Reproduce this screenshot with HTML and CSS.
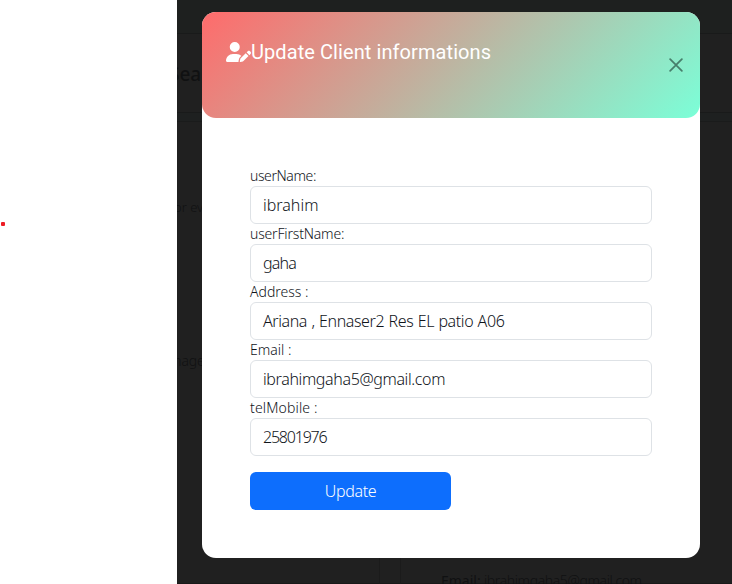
FILE: index.html
```html
<!DOCTYPE html>
<html lang="en">
<head>
<meta charset="utf-8">
<title>Update Client</title>
<link rel="stylesheet" href="styles.css">
</head>
<body>
<aside class="margin"><span class="marker"></span></aside>
<main class="page">
  <div class="backdrop" aria-hidden="true">
    <div class="navbar"></div>
    <div class="toolbar"></div>
    <div class="strip"></div>
    <div class="content"></div>
    <span class="ghost ghost-search">Sea</span>
    <span class="ghost ghost-or">or ev</span>
    <span class="ghost ghost-image">mage</span>
    <span class="ghost ghost-email"><b>Email:</b> ibrahimgaha5@gmail.com</span>
    <span class="column-gap"></span>
  </div>
  <section class="modal">
    <header class="modal-header">
      <h1 class="title">
        <svg class="user-pen" viewBox="0 0 640 512"><path fill="currentColor" d="M224 256A128 128 0 1 0 224 0a128 128 0 1 0 0 256zm-45.700 48C79.800 304 0 383.800 0 482.300C0 498.700 13.300 512 29.700 512H322.800c-3.100-8.800-3.700-18.400-1.400-27.800l15-60.100c2.800-11.300 8.600-21.500 16.800-29.700l40.300-40.300c-32.100-31-75.700-50.100-123.900-50.100H178.300zm435.500-68.300c-15.600-15.600-40.900-15.600-56.600 0l-29.400 29.400 71 71 29.400-29.400c15.600-15.600 15.600-40.900 0-56.600l-14.400-14.400zM375.900 417c-4.100 4.100-7 9.200-8.400 14.900l-15 60.100c-1.400 5.500 .2 11.200 4.200 15.200s9.700 5.600 15.200 4.200l60.100-15c5.600-1.400 10.800-4.300 14.900-8.400L576.100 358.700l-71-71L375.900 417z"/></svg><span>Update Client informations</span>
      </h1>
      <button class="close" aria-label="Close"><svg viewBox="0 0 16 16"><path d="M1.300 1.300L14.700 14.700M14.700 1.300L1.300 14.700" fill="none" stroke="currentColor" stroke-width="2" stroke-linecap="round"/></svg></button>
    </header>
    <form class="form">
      <label class="label tight">userName:</label>
      <div class="input">ibrahim</div>
      <label class="label snug">userFirstName:</label>
      <div class="input short">gaha</div>
      <label class="label">Address :</label>
      <div class="input address">Ariana , Ennaser2 Res EL patio A06</div>
      <label class="label">Email :</label>
      <div class="input email">ibrahimgaha5@gmail.com</div>
      <label class="label loose">telMobile :</label>
      <div class="input phone">25801976</div>
      <button class="submit" type="button">Update</button>
    </form>
  </section>
</main>
</body>
</html>
```
FILE: styles.css
```css
* { box-sizing: border-box; }
body {
  margin: 0;
  height: 584px;
  display: flex;
  overflow: hidden;
  background: #fff;
  color: #212529;
  font-family: "Noto Sans", "Open Sans", sans-serif;
  font-weight: 300;
}
.margin { width: 177px; padding-top: 222px; }
.marker { display: block; width: 4px; height: 4px; margin-left: 1px; border-radius: 1px; background: #ed1c24; }
.page { position: relative; flex: 1; padding: 12px 32px 0 25px; background: #202020; overflow: hidden; }
.backdrop { position: absolute; inset: 0; display: flex; flex-direction: column; }
.navbar { height: 34px; background: #1e201f; border-bottom: 1px solid #191a1a; }
.toolbar { height: 79px; border-bottom: 1px solid #191a1a; }
.strip { height: 9px; background: #1e2020; border-bottom: 1px solid #1a1b1b; }
.content { flex: 1; border-bottom: 1px solid #191919; }
.ghost { position: absolute; color: #101112; white-space: nowrap; line-height: 20px; }
.ghost-search { left: -8px; top: 64px; font-size: 19px; font-weight: 500; }
.ghost-or { left: -3px; top: 197px; font-size: 13px; }
.ghost-image { left: -8px; top: 351px; font-size: 14px; letter-spacing: -.1px; }
.ghost-email { left: 264px; top: 571px; font-size: 14px; letter-spacing: -.4px; }
.ghost-email b { letter-spacing: 0; }
.column-gap { position: absolute; left: 202px; top: 558px; width: 22px; height: 26px; border: solid #1b1b1b; border-width: 0 1px; }
.modal { position: relative; width: 498px; height: 546px; border-radius: 14px; background: #fff; }
.modal-header {
  display: flex;
  justify-content: space-between;
  height: 106px;
  padding: 28px 16px 0 24px;
  border-radius: 14px;
  background: linear-gradient(135deg, #ff6b6b, #7bffd8);
}
.title { display: flex; align-items: center; height: 24px; margin: 0; color: #fff; font: 400 20px/24px Roboto, sans-serif; letter-spacing: .08px; white-space: nowrap; }
.user-pen { width: 25px; height: 20px; }
.close { display: flex; width: 16px; height: 16px; margin-top: 17px; padding: 1px; border: 0; background: none; color: #467e6b; }
.form { display: flex; flex-direction: column; padding: 48px; }
.label { height: 20px; font-size: 14px; line-height: 20px; color: #10141a; white-space: nowrap; }
.tight { letter-spacing: -.4px; }
.snug { letter-spacing: -.18px; }
.loose { letter-spacing: .15px; }
.input { height: 38px; padding: 0 12px; border: 1px solid #dee2e6; border-radius: 6px; color: #10141a; font-size: 16px; line-height: 37px; white-space: nowrap; }
.short { letter-spacing: -.8px; }
.address { letter-spacing: -.4px; word-spacing: .65px; }
.email { letter-spacing: -.37px; }
.phone { letter-spacing: -1.2px; }
.submit { width: 201px; height: 38px; margin-top: 16px; padding: 0; border: 0; border-radius: 6px; background: #0d6efd; color: #fff; font: inherit; font-size: 16px; line-height: 39px; letter-spacing: -.35px; }
```
